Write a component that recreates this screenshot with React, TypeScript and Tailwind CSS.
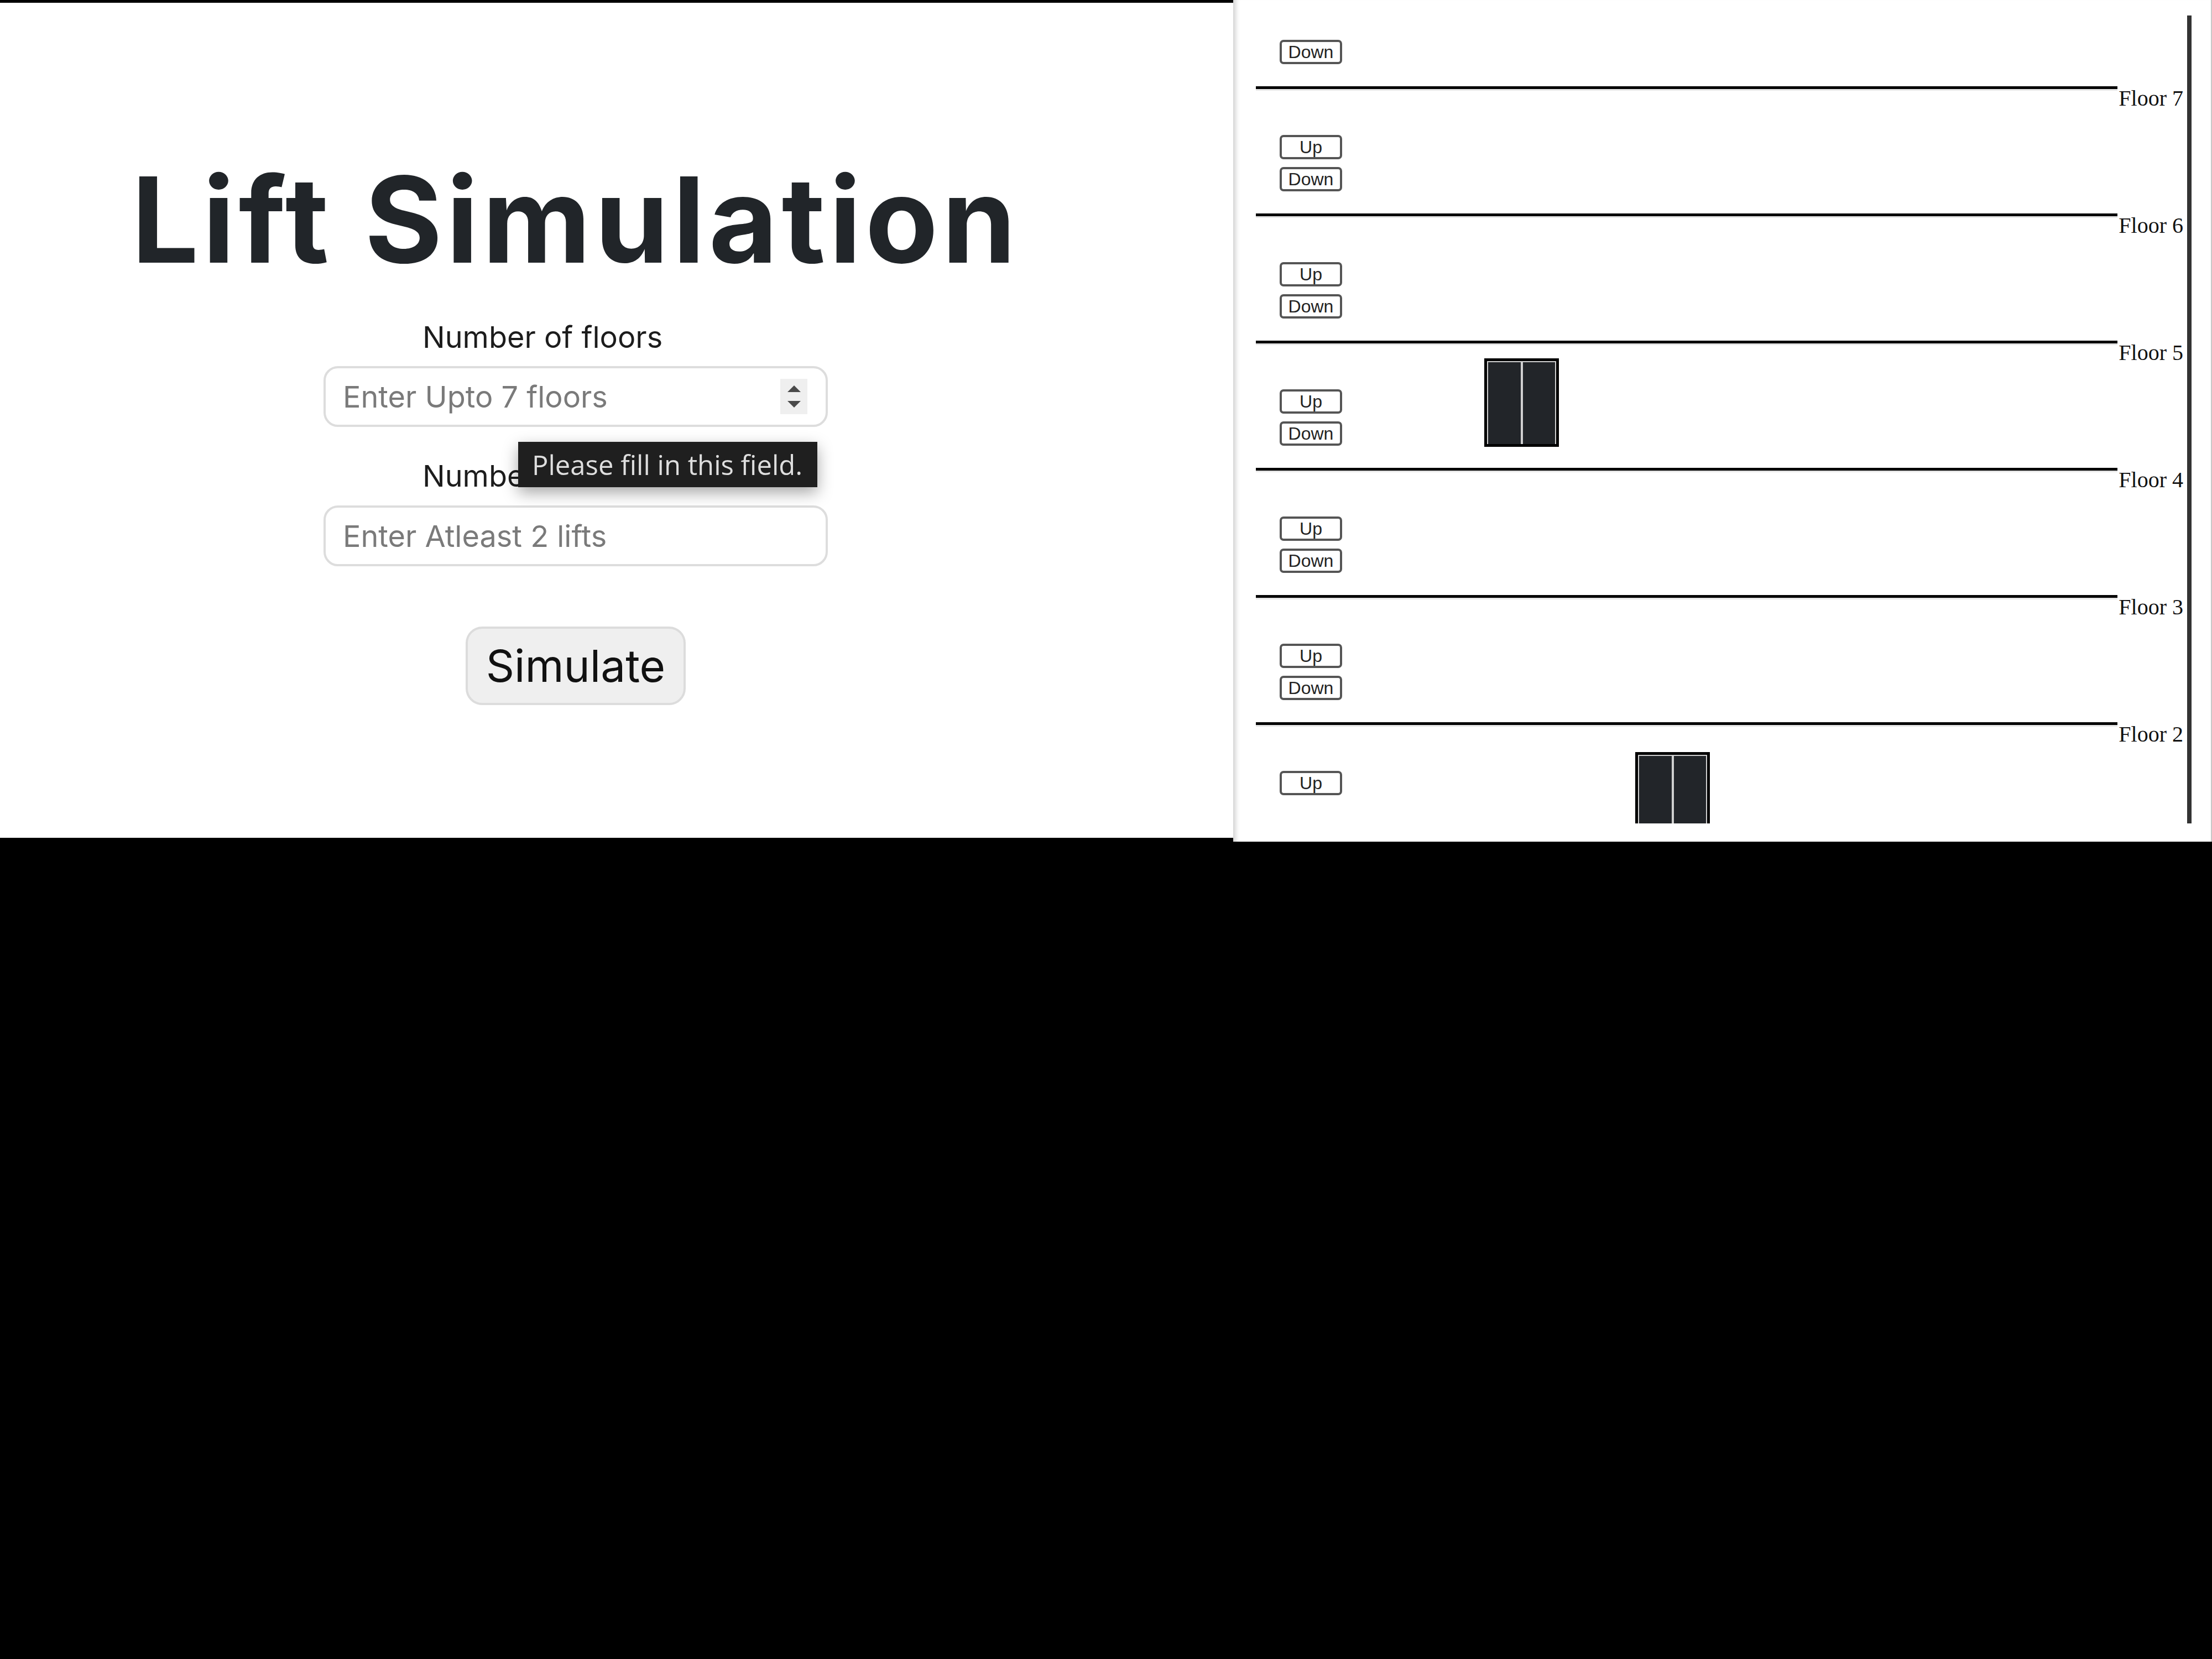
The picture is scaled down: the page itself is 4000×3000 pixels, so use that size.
import React from "react";

function Spinner() {
  return (
    <div className="w-[49px] h-[64px] bg-[#efefef] flex flex-col items-center justify-center gap-[16px] shrink-0">
      <svg width="24" height="12" viewBox="0 0 24 12"><polygon points="12,0 24,12 0,12" fill="#4a4a4a" /></svg>
      <svg width="24" height="12" viewBox="0 0 24 12"><polygon points="0,0 24,0 12,12" fill="#4a4a4a" /></svg>
    </div>
  );
}

function FloorButton({ label }: { label: string }) {
  return (
    <button className="w-[113px] h-[44px] bg-white border-[4px] border-[#555555] rounded-[7px] text-[32px] leading-none text-[#222222] flex items-center justify-center [font-family:'Liberation_Sans',Arial,sans-serif]">
      {label}
    </button>
  );
}

function Floor({ n, up, down, line }: { n: number; up: boolean; down: boolean; line: boolean }) {
  return (
    <div>
      <div className="pt-[44px] pb-[40px] pl-[43px] flex flex-col items-start gap-[14px]">
        {up && <FloorButton label="Up" />}
        {down && <FloorButton label="Down" />}
      </div>
      {line && (
        <div className="flex items-start h-[44px]">
          <div className="flex-1 h-[8px] border-t-[5px] border-t-black border-b-[3px] border-b-[#e6e6e6]" />
          <span className="pl-[2px] pr-[7px] text-[40px] leading-[44px] text-[#111111] [font-family:'Liberation_Serif','Times_New_Roman',serif]">
            Floor {n}
          </span>
        </div>
      )}
    </div>
  );
}

function Lift({ left, top }: { left: number; top: number }) {
  return (
    <div
      className="absolute w-[135px] h-[160px] bg-black pt-[5px] px-[5px] pb-[5px] flex"
      style={{ left, top }}
    >
      <div className="flex-1 bg-[#222529] border-t-[2px] border-l-[2px] border-r-[2px] border-[#cfcfcf]" />
      <div className="flex-1 bg-[#222529] border-t-[2px] border-l-[2px] border-r-[2px] border-[#cfcfcf]" />
    </div>
  );
}

export default function App() {
  const floors = [
    { n: 7, up: false, down: true, line: true },
    { n: 6, up: true, down: true, line: true },
    { n: 5, up: true, down: true, line: true },
    { n: 4, up: true, down: true, line: true },
    { n: 3, up: true, down: true, line: true },
    { n: 2, up: true, down: true, line: true },
    { n: 1, up: true, down: false, line: false },
  ];
  return (
    <div className="w-[4000px] h-[3000px] bg-black flex items-start">
      {/* Left panel */}
      <div className="mt-[5px] w-[2230px] h-[1510px] bg-white shrink-0 [font-family:Inter,'Noto_Sans',sans-serif]">
        <div className="w-[2082px] flex flex-col items-center pt-[285px]">
          <h1 className="text-[215px] leading-none font-bold text-[#212529] tracking-[7px]">Lift Simulation</h1>
          <div className="relative w-[912px] mt-[78px] flex flex-col">
            <label className="pl-[179px] text-[54px] leading-none text-[#1c1c1c]">Number of floors</label>
            <div className="mt-[25px] h-[110px] border-[4px] border-[#dddddd] rounded-[26px] flex items-center pl-[31px] pr-[33px]">
              <input
                placeholder="Enter Upto 7 floors"
                className="flex-1 min-w-0 outline-none bg-transparent text-[54px] leading-none placeholder:text-[#7a7a7a]"
              />
              <Spinner />
            </div>
            <label className="mt-[62px] pl-[179px] text-[54px] leading-none text-[#1c1c1c]">Number of lifts</label>
            <div className="mt-[26px] h-[110px] border-[4px] border-[#dddddd] rounded-[26px] flex items-center pl-[31px] pr-[33px]">
              <input
                placeholder="Enter Atleast 2 lifts"
                className="flex-1 min-w-0 outline-none bg-transparent text-[54px] leading-none placeholder:text-[#7a7a7a]"
              />
            </div>
            <div className="absolute left-[352px] top-[216px] w-[541px] h-[82px] bg-[#1f1f1f] flex items-center pl-[25px] shadow-[0_10px_28px_rgba(0,0,0,0.35)]">
              <span className="text-[49px] leading-none text-[#dedede] whitespace-nowrap [font-family:'Open_Sans','Noto_Sans',sans-serif]">
                Please fill in this field.
              </span>
            </div>
          </div>
          <button className="mt-[109px] w-[398px] h-[142px] bg-[#efefef] border-[4px] border-[#dcdcdc] rounded-[30px] text-[80px] leading-none text-[#111111] flex items-center justify-center">
            Simulate
          </button>
        </div>
      </div>

      {/* Right panel */}
      <div className="w-[1770px] h-[1522px] bg-white shrink-0 pl-[41px] pr-[35px] pt-[28px] border-r-[2px] border-[#c8c8c8] shadow-[inset_12px_0_10px_-8px_rgba(0,0,0,0.2)]">
        <div className="relative h-[1461px] overflow-hidden border-r-[8px] border-[#333333]">
          {floors.map((f) => (
            <Floor key={f.n} n={f.n} up={f.up} down={f.down} line={f.line} />
          ))}
          <Lift left={413} top={620} />
          <Lift left={686} top={1332} />
        </div>
      </div>
    </div>
  );
}
